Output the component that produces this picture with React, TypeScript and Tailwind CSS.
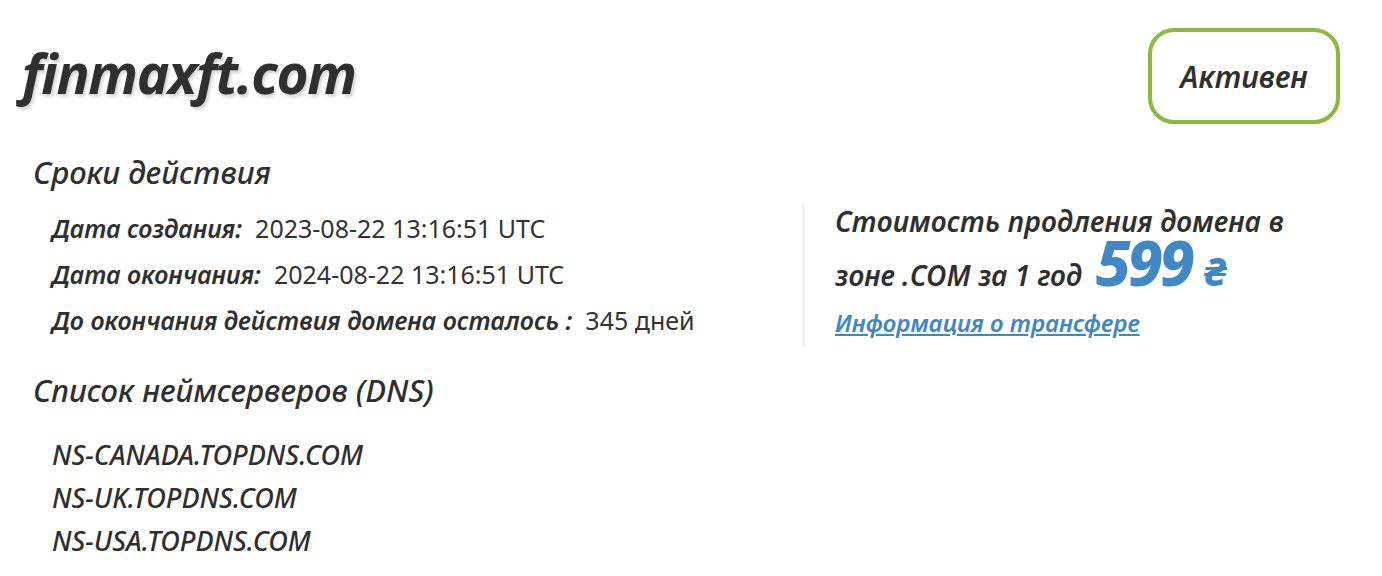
const rows = [
  { label: 'Дата создания:', value: '2023-08-22 13:16:51 UTC' },
  { label: 'Дата окончания:', value: '2024-08-22 13:16:51 UTC' },
  { label: 'До окончания действия домена осталось :', value: '345 дней' },
]

const servers = ['NS-CANADA.TOPDNS.COM', 'NS-UK.TOPDNS.COM', 'NS-USA.TOPDNS.COM']

export default function App() {
  return (
    <div
      className="w-[1382px] h-[576px] bg-white text-[#2f2f2f] overflow-hidden"
      style={{ fontFamily: '"Noto Sans", "Open Sans", sans-serif' }}
    >
      <div className="flex items-start justify-between pl-[22px] pr-[42px] pt-[28px]">
        <h1 className="text-[55px] leading-none font-bold italic tracking-[-1.3px] mt-[17px] [text-shadow:2px_3px_3px_#d8d8d8]">
          finmaxft.com
        </h1>
        <div className="w-[192px] h-[96px] rounded-[26px] border-[4px] border-[#8cb83c] flex items-center justify-center text-[30px] font-semibold italic">
          Активен
        </div>
      </div>

      <div className="flex mt-[30px]">
        <div className="w-[802px] shrink-0">
          <h2 className="pl-[33px] text-[31px] leading-[36px] font-medium italic">Сроки действия</h2>
          <div className="pl-[52px] mt-[23px] flex flex-col gap-[16px]">
            {rows.map((r) => (
              <div key={r.label} className="flex items-baseline gap-[13px] leading-[30px]">
                <span className="text-[25px] font-semibold italic">{r.label}</span>
                <span className="text-[25px] text-[#333]">{r.value}</span>
              </div>
            ))}
          </div>
          <h2 className="pl-[33px] mt-[37px] text-[31px] leading-[36px] font-medium italic">
            Список неймсерверов (DNS)
          </h2>
          <div className="pl-[52px] mt-[32px] flex flex-col gap-[13px]">
            {servers.map((s) => (
              <div key={s} className="text-[27px] leading-[30px] font-medium italic">
                {s}
              </div>
            ))}
          </div>
        </div>

        <div className="mt-[49px] h-[142px] border-l-[3px] border-[#f0f0f0] pl-[30px]">
          <p className="text-[28px] font-semibold italic leading-[40px] -mt-[2px] tracking-[0.2px]">
            Стоимость продления домена в
          </p>
          <p className="-mt-[10px] text-[28px] font-semibold italic leading-[44px] flex items-baseline">
            <span className="mr-[14px]">зоне .COM за 1 год</span>
            <span className="text-[62px] font-extrabold text-[#3f88c5] leading-none tracking-[-3px]">599</span>
            <span className="ml-[12px] text-[40px] font-extrabold text-[#3f88c5] leading-none">₴</span>
          </p>
          <a className="mt-[10px] block text-[24px] font-semibold italic text-[#3f88c5] underline leading-[32px]">
            Информация о трансфере
          </a>
        </div>
      </div>
    </div>
  )
}
